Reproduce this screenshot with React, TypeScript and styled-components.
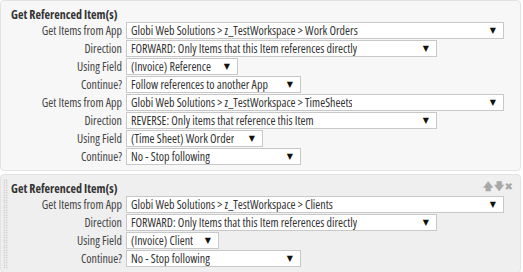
import React from "react"
import styled, { createGlobalStyle } from "styled-components"

// ************
// data
// ************

type Row = { label: string; value: string; width: number }

const blockOne: Row[] = [
	{ label: "Get Items from App", value: "Globi Web Solutions > z_TestWorkspace > Work Orders", width: 378 },
	{ label: "Direction", value: "FORWARD: Only Items that this Item references directly", width: 311 },
	{ label: "Using Field", value: "(Invoice) Reference", width: 112 },
	{ label: "Continue?", value: "Follow references to another App", width: 175 },
	{ label: "Get Items from App", value: "Globi Web Solutions > z_TestWorkspace > TimeSheets", width: 378 },
	{ label: "Direction", value: "REVERSE: Only items that reference this Item", width: 311 },
	{ label: "Using Field", value: "(Time Sheet) Work Order", width: 137 },
	{ label: "Continue?", value: "No - Stop following", width: 175 },
]

const blockTwo: Row[] = [
	{ label: "Get Items from App", value: "Globi Web Solutions > z_TestWorkspace > Clients", width: 378 },
	{ label: "Direction", value: "FORWARD: Only Items that this Item references directly", width: 311 },
	{ label: "Using Field", value: "(Invoice) Client", width: 93 },
	{ label: "Continue?", value: "No - Stop following", width: 175 },
]

// ************
// component
// ************

function Fields({ rows }: { rows: Row[] }) {
	return (
		<Grid>
			{rows.map((row, i) => (
				<React.Fragment key={i}>
					<Label>{row.label}</Label>
					<Select $width={row.width}>
						<Value>{row.value}</Value>
						<Arrow>▼</Arrow>
					</Select>
				</React.Fragment>
			))}
		</Grid>
	)
}

export default function App() {
	return (
		<>
			<GlobalStyle />
			<Page>
				<Panel>
					<Title>Get Referenced Item(s)</Title>
					<Fields rows={blockOne} />
				</Panel>
				<Panel $active>
					<Handle />
					<Tools>
						<span>🡅</span>
						<span>🡇</span>
						<span>✖</span>
					</Tools>
					<Title>Get Referenced Item(s)</Title>
					<Fields rows={blockTwo} />
				</Panel>
			</Page>
		</>
	)
}

// ************
// styles
// ************

const GlobalStyle = createGlobalStyle`
	body {
		margin: 0;
		background: #fff;
		font-family: "Open Sans", "Noto Sans", sans-serif;
		font-size: 12px;
		font-stretch: 87%;
		color: #333;
	}
`
const Page = styled.div`
	display: flex;
	flex-direction: column;
	gap: 3px;
	width: 521px;
`
const Panel = styled.div<{ $active?: boolean }>`
	position: relative;
	padding: 7px 0 5px 0;
	border: 1px solid #e3e3e3;
	border-radius: 4px;
	background: ${({ $active }) => ($active ? "#efefef" : "#f7f7f7")};
`
const Handle = styled.div`
	position: absolute;
	left: 2px;
	top: 4px;
	bottom: 3px;
	width: 5px;
	background-image: radial-gradient(circle, #c4c4c4 0.7px, transparent 0.9px);
	background-size: 2.5px 2.5px;
`
const Tools = styled.div`
	position: absolute;
	right: 7px;
	top: 6px;
	display: flex;
	gap: 1px;
	color: #a8a8a8;
	font-size: 10px;
	font-weight: bold;
	line-height: 12px;
	font-family: "DejaVu Sans", sans-serif;
	font-stretch: normal;
`
const Title = styled.div`
	padding-left: 10px;
	height: 14px;
	font-weight: bold;
	line-height: 14px;
	color: #333;
`
const Grid = styled.div`
	display: grid;
	grid-template-columns: 125px auto;
	row-gap: 1px;
	align-items: center;
`
const Label = styled.div`
	padding-right: 4px;
	text-align: right;
	white-space: nowrap;
	color: #444;
`
const Select = styled.div<{ $width: number }>`
	display: flex;
	justify-content: space-between;
	align-items: center;
	gap: 4px;
	box-sizing: border-box;
	width: ${({ $width }) => $width}px;
	height: 17px;
	padding: 0 7px 0 4px;
	border: 1px solid #c8c8c8;
	background: #fff;
	white-space: nowrap;
	color: #333;
`
const Value = styled.span`
	overflow: hidden;
	min-width: 0;
`
const Arrow = styled.span`
	flex: none;
	font-size: 8px;
	color: #111;
	font-family: "DejaVu Sans", sans-serif;
	font-stretch: normal;
`
